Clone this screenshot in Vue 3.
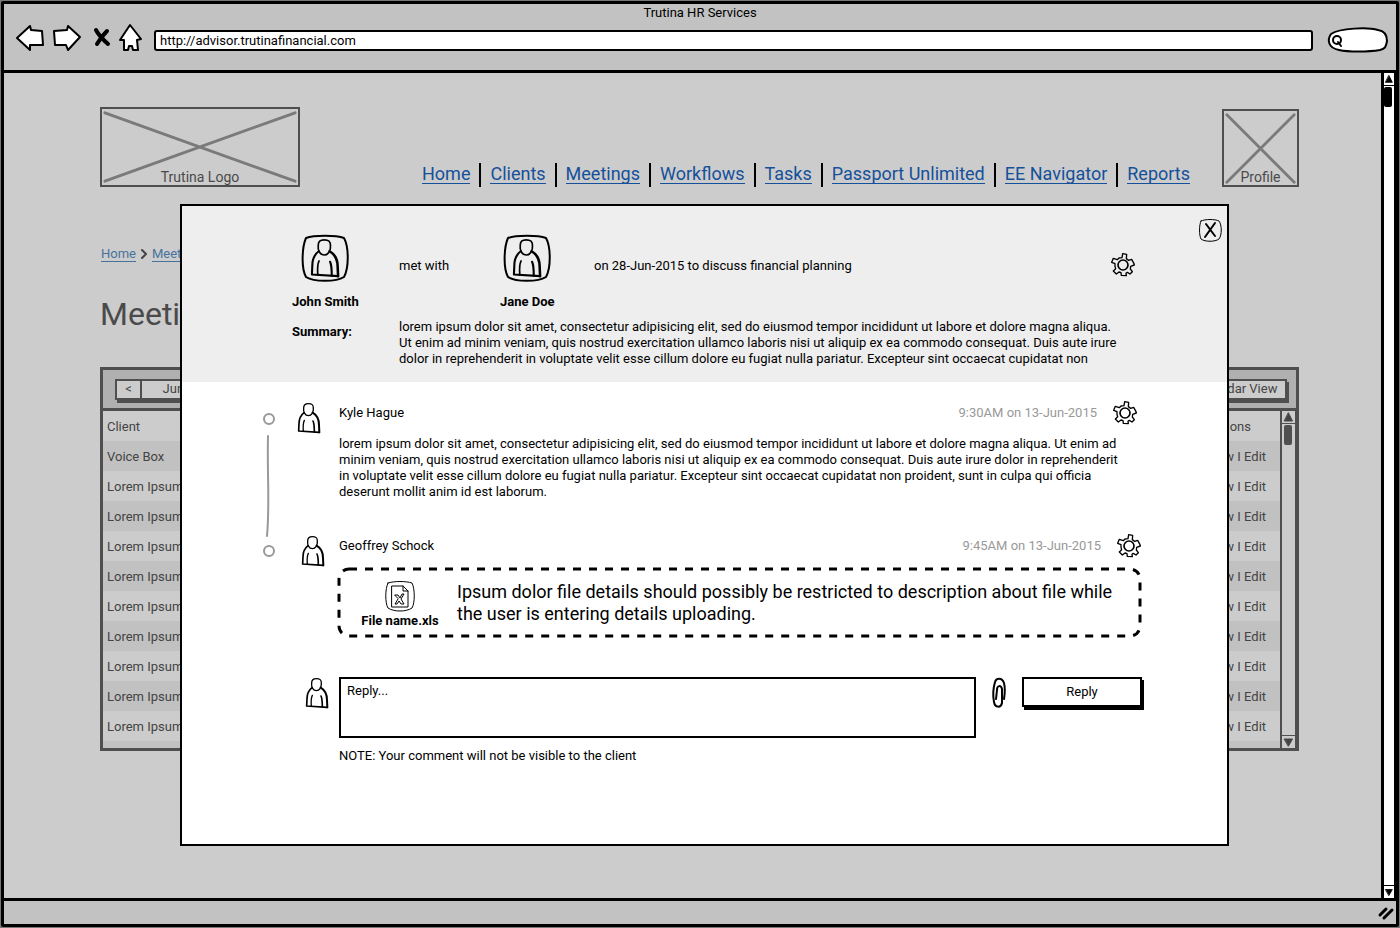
<script setup>
import { h, ref } from 'vue'

const navItems = ['Home', 'Clients', 'Meetings', 'Workflows', 'Tasks', 'Passport Unlimited', 'EE Navigator', 'Reports']
const clients = ['Voice Box', ...Array(9).fill('Lorem Ipsum')]
const address = ref('http://advisor.trutinafinancial.com')
const reply = ref('')

const path = (d, width) => h('path', { d, 'stroke-width': width })

const PersonIcon = () =>
  h('svg', { viewBox: '0 0 66 90', fill: 'none', stroke: '#000', 'stroke-linejoin': 'round', 'aria-hidden': 'true' }, [
    path('M17 15 C17 5 21 2 31 2 C42 2 46 5 46 15 C47 24 44 29 42 32 C37 40 25 40 20 31 C17 27 16 22 17 15Z', 4),
    path('M18 29 C8 37 3 50 3 62 L2 84 L64 88', 5),
    path('M44 29 C58 37 63 50 63 66 L64 88', 6),
    path('M19 52 C14 62 15 72 16 85', 4),
    path('M45 54 C49 62 49 72 49 87', 5),
  ])

const GearIcon = () =>
  h('svg', { viewBox: '0 0 72 72', fill: 'none', stroke: '#000', 'stroke-linejoin': 'round', 'aria-hidden': 'true' }, [
    path('M33 14 L35 2 L47 4 L46 17 L53 22 L62 19 L69 32 L70 36 L59 40 L58 48 L64 56 L57 63 L49 58 L45 61 L46 68 L31 67 L30 59 L24 57 L16 63 L7 54 L14 47 L12 40 L12 32 L2 28 L7 16 L19 20 L24 15Z', 4),
    h('circle', { cx: 36, cy: 36, r: 15, 'stroke-width': 5 }),
  ])
</script>

<template>
  <div class="window">
    <header class="chrome">
      <div class="title">Trutina HR Services</div>
      <div class="toolbar">
        <button class="tool back" aria-label="Back">
          <svg viewBox="0 0 28 26"><path d="M1 13 L14 1 L15 5 L26 6 L27 20 L14 20 L14 25 Z" /></svg>
        </button>
        <button class="tool forward" aria-label="Forward">
          <svg viewBox="0 0 28 26"><path d="M1 6 L14 5 L15 1 L27 12 L15 25 L13 20 L2 20 Z" /></svg>
        </button>
        <button class="tool stop" aria-label="Stop">
          <svg viewBox="0 0 18 20"><path d="M3 2 Q6 8 15 16 M14 3 Q8 9 4 16" /></svg>
        </button>
        <button class="tool home" aria-label="Home page">
          <svg viewBox="0 0 24 28"><path d="M11 1 L22 15 L18 16 L19 26 L14 26 L13 22 L10 22 L9 26 L5 26 L5 16 L1 16 Z" /></svg>
        </button>
        <input v-model="address" class="address" aria-label="Address" />
        <label class="search">
          <svg viewBox="0 0 60 26" preserveAspectRatio="none"><path d="M3 7 C12 1 40 0 50 3 C57 4 59 8 59 14 C58 20 57 22 52 23 C40 25 20 25 11 23 C0 21 -1 13 3 7Z" /><circle cx="9" cy="13" r="4" /><path d="M10 15 L13 19" /></svg>
          <input aria-label="Search" />
        </label>
      </div>
    </header>

    <div class="viewport">
      <main class="page">
        <div class="masthead">
          <div class="placeholder logo">
            <svg viewBox="0 0 200 80" preserveAspectRatio="none"><path d="M3 4 L197 76 M197 4 L3 76" /></svg>
            <span>Trutina Logo</span>
          </div>
          <nav class="nav">
            <template v-for="(item, i) in navItems" :key="item">
              <i v-if="i" class="bar"></i>
              <a href="#">{{ item }}</a>
            </template>
          </nav>
          <div class="placeholder profile">
            <svg viewBox="0 0 78 78" preserveAspectRatio="none"><path d="M3 4 L75 75 M75 4 L3 75" /></svg>
            <span>Profile</span>
          </div>
        </div>

        <div class="crumbs">
          <a href="#">Home</a>
          <svg viewBox="0 0 8 10"><path d="M2 1 L6 5 L2 9" /></svg>
          <a href="#">Meetings</a>
        </div>
        <h1>Meetings</h1>

        <section class="listing">
          <div class="listing-bar">
            <div class="month">
              <button aria-label="Previous month">&lt;</button>
              <button class="wide">June 2015</button>
            </div>
            <button class="view">Calendar View</button>
          </div>
          <div class="listing-body">
            <table>
              <thead>
                <tr><th>Client</th><th class="last">Options</th></tr>
              </thead>
              <tbody>
                <tr v-for="(client, i) in clients" :key="i">
                  <td>{{ client }}</td><td class="last">View I Edit</td>
                </tr>
                <tr class="partial"><td></td><td></td></tr>
              </tbody>
            </table>
            <div class="scroll small">
              <svg viewBox="0 0 12 12"><path d="M6 2 L10 10 L2 10Z" /></svg>
              <div class="thumb"></div>
              <svg viewBox="0 0 12 12"><path d="M2 3 L10 3 L6 10Z" /></svg>
            </div>
          </div>
        </section>
      </main>
      <div class="scroll">
        <svg viewBox="0 0 12 12"><path d="M6 2 L10 10 L2 10Z" /></svg>
        <div class="thumb"></div>
        <svg viewBox="0 0 12 12"><path d="M2 3 L10 3 L6 10Z" /></svg>
      </div>

      <div class="modal" role="dialog" aria-label="Meeting details">
        <button class="close" aria-label="Close">
          <svg viewBox="0 0 24 24"><path d="M3 3 C7 1 17 1 21 3 C24 7 24 17 21 21 C17 24 7 24 3 21 C1 17 1 7 3 3Z" /><path class="cross" d="M8 6 L17 18 M17 5 L7 19" /></svg>
        </button>
        <div class="summary">
          <div class="person">
            <div class="framed">
              <svg class="frame" viewBox="0 0 48 48"><path d="M5 4 C13 1 35 1 43 4 C48 13 48 34 43 43 C35 48 13 48 5 43 C0 34 1 13 5 4Z" /></svg>
              <PersonIcon class="figure" />
            </div>
            <b>John Smith</b>
          </div>
          <p class="phrase">met with</p>
          <div class="person">
            <div class="framed">
              <svg class="frame" viewBox="0 0 48 48"><path d="M5 4 C13 1 35 1 43 4 C48 13 48 34 43 43 C35 48 13 48 5 43 C0 34 1 13 5 4Z" /></svg>
              <PersonIcon class="figure" />
            </div>
            <b>Jane Doe</b>
          </div>
          <p class="phrase">on 28-Jun-2015 to discuss financial planning</p>
          <button class="gear" aria-label="Meeting settings"><GearIcon /></button>
          <b class="label">Summary:</b>
          <p class="text">lorem ipsum dolor sit amet, consectetur adipisicing elit, sed do eiusmod tempor incididunt ut labore et dolore magna aliqua.<br />Ut enim ad minim veniam, quis nostrud exercitation ullamco laboris nisi ut aliquip ex ea commodo consequat. Duis aute irure<br />dolor in reprehenderit in voluptate velit esse cillum dolore eu fugiat nulla pariatur. Excepteur sint occaecat cupidatat non</p>
        </div>

        <div class="thread">
          <svg class="timeline" viewBox="0 0 14 144">
            <circle cx="7" cy="6" r="5" />
            <path d="M6 23 C5 60 8 90 5 123" />
            <circle cx="7" cy="138" r="5" />
          </svg>
          <div class="entries">
            <article class="entry first">
              <PersonIcon class="figure" />
              <div class="content">
                <div class="entry-head">
                  <span>Kyle Hague</span>
                  <time>9:30AM on 13-Jun-2015</time>
                  <button class="gear" aria-label="Comment settings"><GearIcon /></button>
                </div>
                <p class="text">lorem ipsum dolor sit amet, consectetur adipisicing elit, sed do eiusmod tempor incididunt ut labore et dolore magna aliqua. Ut enim ad<br />minim veniam, quis nostrud exercitation ullamco laboris nisi ut aliquip ex ea commodo consequat. Duis aute irure dolor in reprehenderit<br />in voluptate velit esse cillum dolore eu fugiat nulla pariatur. Excepteur sint occaecat cupidatat non proident, sunt in culpa qui officia<br />deserunt mollit anim id est laborum.</p>
              </div>
            </article>
            <article class="entry second">
              <PersonIcon class="figure" />
              <div class="content">
                <div class="entry-head">
                  <span>Geoffrey Schock</span>
                  <time>9:45AM on 13-Jun-2015</time>
                  <button class="gear" aria-label="Comment settings"><GearIcon /></button>
                </div>
                <div class="attachment">
                  <svg class="dashes"><rect x="0" y="1" rx="10" /></svg>
                  <div class="file">
                    <svg viewBox="0 0 32 32"><path d="M4 3 C10 1 22 1 28 3 C31 9 31 23 28 28 C22 32 10 32 4 28 C1 23 1 9 4 3Z" /><path d="M8 6 L19 6 L24 11 L24 27 L8 27 Z M19 6 L19 11 L24 11" /><path d="M11 15 L14 15 L16 18 L18 14 L20 14 L17 19 L20 24 L17 24 L15 21 L13 24 L11 24 L14 19Z" /></svg>
                    <b>File name.xls</b>
                  </div>
                  <p>Ipsum dolor file details should possibly be restricted to description about file while<br />the user is entering details uploading.</p>
                </div>
              </div>
            </article>
            <form class="entry answer" @submit.prevent>
              <PersonIcon class="figure" />
              <div class="content">
                <div class="reply-row">
                  <textarea v-model="reply" placeholder="Reply..." aria-label="Reply"></textarea>
                  <button type="button" class="clip" aria-label="Attach file">
                    <svg viewBox="0 0 14 32"><path d="M10 20 L10 12 C9 8 5 8 5 13 L4 22 M12 22 C13 16 13 10 12 6 C10 0 4 1 3 5 C1 12 1 20 2 25 C3 31 9 31 10 26 L10 18" /></svg>
                  </button>
                  <button class="send">Reply</button>
                </div>
                <p class="note">NOTE: Your comment will not be visible to the client</p>
              </div>
            </form>
          </div>
        </div>
      </div>
    </div>

    <footer class="status">
      <svg viewBox="0 0 16 14"><path d="M2 9 L8 3 M6 12 L14 4" /></svg>
    </footer>
  </div>
</template>

<style>
body { background: #777; }
</style>

<style scoped>
* { box-sizing: border-box; }
.window {
  min-height: calc(100vh - 2px);
  margin: 1px;
  border: 3px solid #000;
  border-radius: 2px;
  display: flex;
  flex-direction: column;
  background: #ccc;
  color: #000;
  font: 13px/16px Roboto, "Liberation Sans", sans-serif;
}
p, h1 { margin: 0; }
button, input, textarea { font: inherit; color: inherit; }
button { background: none; border: 0; padding: 0; cursor: pointer; }
svg { display: block; fill: none; stroke: #000; stroke-width: 2; stroke-linejoin: round; stroke-linecap: round; overflow: visible; }

.chrome { background: #c2c2c2; border-bottom: 3px solid #000; padding-bottom: 12px; }
.title { text-align: center; line-height: 18px; }
.toolbar { display: flex; align-items: center; height: 36px; padding: 0 8px 0 12px; }
.tool svg { fill: #fff; }
.back svg, .forward svg { width: 28px; height: 26px; }
.back, .forward, .stop, .home { margin-bottom: 5px; }
.back { margin-right: 9px; }
.forward { margin-right: 12px; }
.stop { margin-right: 8px; }
.stop svg { width: 18px; height: 20px; stroke-width: 4; fill: none; }
.home { margin-right: 11px; }
.home svg { width: 24px; height: 28px; }
.address { flex: 1; min-width: 0; height: 21px; border: 2px solid #000; border-radius: 3px; padding: 0 4px; background: #fff; margin-right: 15px; }
.search { position: relative; width: 60px; height: 26px; }
.search svg { position: absolute; inset: 0; width: 100%; height: 100%; fill: #fff; }
.search input { position: relative; width: 36px; height: 16px; margin: 5px 0 0 18px; border: 0; background: none; padding: 0; }

.viewport { flex: 1; display: flex; position: relative; }
.page { flex: 1; padding: 34px 82px 100px 96px; }
.masthead { display: flex; align-items: flex-end; }
.placeholder { position: relative; border: 2px solid #4f4f4f; display: flex; align-items: flex-end; justify-content: center; color: #4a4a4a; font-size: 14px; line-height: 16px; }
.placeholder svg { position: absolute; inset: 0; width: 100%; height: 100%; stroke: #7a7a7a; stroke-width: 3; }
.placeholder span { position: relative; }
.logo { width: 200px; height: 80px; }
.profile { width: 77px; height: 78px; margin-left: 32px; }
.nav { flex: 1; display: flex; justify-content: space-between; align-items: center; height: 24px; margin-left: 122px; font-size: 18px; }
.nav a { color: #15509a; text-decoration: none; border-bottom: 1px solid #15509a; line-height: 19px; margin-bottom: 2px; }
.bar { width: 2px; height: 24px; background: #000; }
.crumbs { display: flex; align-items: center; gap: 4px; margin-top: 58px; height: 17px; padding-left: 1px; }
.crumbs a { color: #48729e; text-decoration: none; border-bottom: 1px solid #48729e; line-height: 15px; }
.crumbs svg { width: 8px; height: 10px; stroke: #444; }
h1 { margin-top: 32px; font-size: 32px; line-height: 40px; font-weight: 400; color: #4a4a4a; }

.listing { margin-top: 33px; border: 3px solid #4f4f4f; color: #444; }
.listing-bar { display: flex; align-items: center; justify-content: space-between; height: 41px; padding: 0 9px 0 12px; background: #b0b0b0; border-bottom: 3px solid #4f4f4f; }
.month { display: flex; box-shadow: 2px 3px 0 #4f4f4f; }
.month button { width: 27px; height: 21px; background: #ccc; border: 2px solid #4f4f4f; }
.month .wide { width: 106px; margin-left: -2px; }
.view { width: 102px; height: 21px; background: #ccc; border: 2px solid #4f4f4f; box-shadow: 2px 3px 0 #4f4f4f; }
.listing-body { display: flex; }
table { flex: 1; border-collapse: collapse; }
th, td { height: 30px; padding: 1px 4px 0; text-align: left; font-weight: 400; }
.last { width: 78px; }
tbody tr:nth-child(odd) { background: #c1c1c1; }
.partial td { height: 7px; padding: 0; }

.scroll { width: 15px; display: flex; flex-direction: column; background: #fff; border: solid #000; border-width: 0 2px 0 3px; }
.scroll svg { width: 10px; height: 12px; fill: #000; stroke-width: 1; outline: 1px solid #000; }
.scroll svg:last-child { margin-top: auto; }
.scroll .thumb { width: 8px; height: 20px; margin-top: 2px; border-radius: 2px; background: #000; }
.scroll.small { width: 16px; background: #ccc; border-color: #4f4f4f; border-width: 0 1px 0 2px; }
.small svg { width: 13px; fill: #444; stroke: #444; outline-color: #4f4f4f; }
.scroll.small .thumb { margin-left: 2px; background: #4f4f4f; }

.modal { position: absolute; top: 131px; left: 176px; right: 167px; min-height: 642px; background: #fff; border: 2px solid #000; }
.close { position: absolute; top: 12px; right: 5px; }
.close svg { width: 24px; height: 24px; stroke-width: 1; }
.close .cross { stroke-width: 2; }
.summary { display: grid; grid-template-columns: 107px 101px 94px 1fr auto; background: #eee; padding: 28px 92px 15px 110px; }
.person { display: flex; flex-direction: column; align-items: center; justify-self: start; gap: 11px; line-height: 18px; }
.framed { position: relative; width: 48px; height: 48px; display: flex; align-items: center; justify-content: center; }
.frame { position: absolute; inset: 0; stroke-width: 2; }
.figure { width: 22px; height: 30px; }
.framed .figure { width: 28px; height: 38px; }
.phrase { padding-top: 24px; }
.gear { align-self: start; }
.summary .gear { margin-top: 19px; }
.gear svg { width: 24px; height: 24px; }
.label { margin-top: 13px; }
.summary .text { grid-column: 2 / -1; margin-top: 8px; }
.text { white-space: nowrap; }

.thread { display: flex; padding: 19px 83px 0 80px; }
.timeline { width: 14px; height: 144px; margin-top: 12px; margin-right: 22px; stroke: #999; }
.entries { flex: 1; }
.entry { display: grid; grid-template-columns: 30px 1fr; gap: 11px; }
.entry > .figure { margin-top: 2px; }
.entry-head { display: flex; align-items: center; height: 24px; }
.entry-head time { margin-left: auto; margin-right: 16px; color: #999; }
.first { padding-right: 7px; }
.first .text { margin-top: 11px; }
.second { margin-top: 34px; padding-right: 3px; }
.second > .figure { justify-self: center; }
.attachment { position: relative; display: flex; align-items: center; height: 69px; margin-top: 10px; padding: 0 16px 0 20px; }
.dashes { position: absolute; inset: 0; width: 100%; height: 100%; stroke-width: 3; stroke-dasharray: 8 8; stroke-linecap: butt; }
.dashes rect { width: calc(100% - 1px); height: calc(100% - 2px); }
.file { display: flex; flex-direction: column; align-items: center; gap: 1px; width: 80px; margin-right: 18px; padding: 4px 0 0 2px; white-space: nowrap; }
.file svg { width: 32px; height: 32px; stroke-width: 1; }
.attachment p { font-size: 18px; line-height: 22px; white-space: nowrap; }
.answer { margin-top: 40px; }
.answer > .figure { justify-self: end; margin-top: 1px; }
.reply-row { display: flex; align-items: flex-start; }
textarea { flex: 1; min-width: 0; height: 61px; border: 2px solid #000; background: #fff; padding: 4px 6px; resize: none; display: block; }
textarea::placeholder { color: #000; opacity: 1; }
.clip { margin: 0 16px; }
.clip svg { width: 14px; height: 32px; }
.send { width: 120px; height: 30px; margin-right: 2px; border: 2px solid #000; background: #fff; box-shadow: 2px 3px 0 #000; }
.note { margin-top: 10px; }

.status { height: 26px; display: flex; justify-content: flex-end; align-items: center; padding-right: 2px; background: #c2c2c2; border-top: 3px solid #000; }
.status svg { width: 16px; height: 14px; stroke-width: 3; }
</style>
